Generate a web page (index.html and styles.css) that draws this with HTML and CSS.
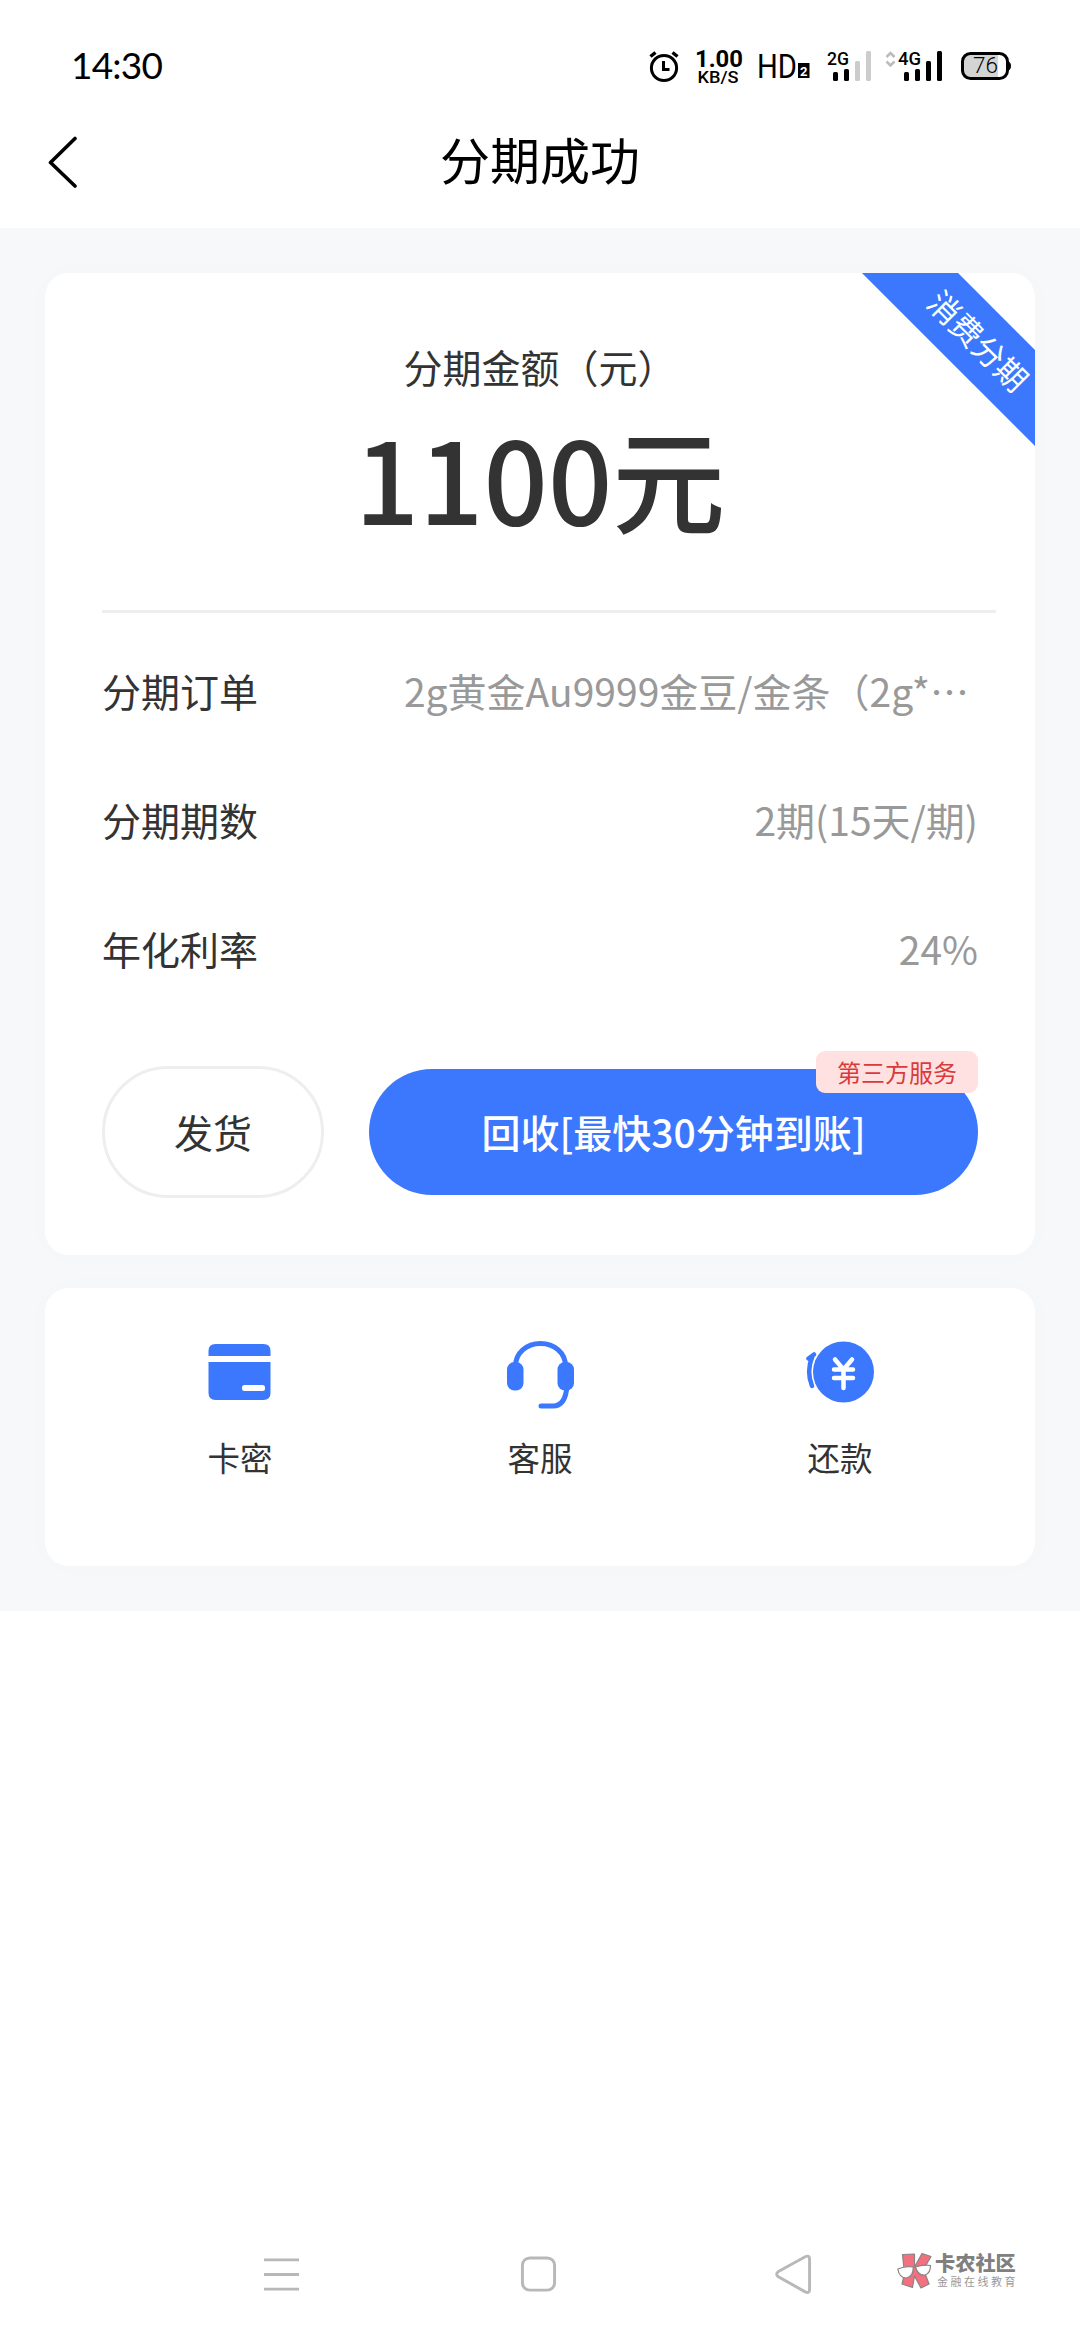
FILE: index.html
```html
<!DOCTYPE html>
<html lang="zh-CN">
<head>
<meta charset="utf-8">
<title>分期成功</title>
<link rel="stylesheet" href="styles.css">
</head>
<body>
<div class="screen">
  <header class="status-bar">
    <span class="clock">14:30</span>
    <svg class="status-icons" width="372" height="44" viewBox="644 44 372 44">
      <g fill="none" stroke="#000">
        <circle cx="664" cy="68" r="12.6" stroke-width="3"/>
        <path d="M663.5 61v8.500h6" stroke-width="3"/>
        <path d="M650.500 56.500l5-4M677.500 56.500l-5-4" stroke-width="3.500"/>
      </g>
      <text x="695" y="66.500" class="bold" font-size="23" textLength="48" lengthAdjust="spacingAndGlyphs">1.00</text>
      <text x="697.500" y="83" class="semi" font-size="17" textLength="41" lengthAdjust="spacingAndGlyphs">KB/S</text>
      <text x="757" y="78" font-size="33" textLength="40" lengthAdjust="spacingAndGlyphs">HD</text>
      <rect x="798" y="63" width="11.500" height="15"/>
      <text x="800" y="75.500" class="bold" font-size="13" fill="#fff">2</text>
      <text x="827" y="65" class="semi" font-size="19" textLength="22" lengthAdjust="spacingAndGlyphs">2G</text>
      <rect x="833" y="72" width="5" height="9" rx="1.500"/>
      <rect x="844" y="69" width="5" height="12" rx="1.500"/>
      <rect x="855" y="61" width="5" height="20" rx="1.500" fill="#ccc"/>
      <rect x="866" y="51" width="5" height="30" rx="1.500" fill="#ccc"/>
      <path d="M886.500 57l4-4 4 4M886.500 61.500l4 4 4-4" fill="none" stroke="#bbb" stroke-width="2.500"/>
      <text x="898" y="65" class="semi" font-size="19" textLength="23" lengthAdjust="spacingAndGlyphs">4G</text>
      <rect x="904" y="72" width="5" height="9" rx="1.500"/>
      <rect x="915" y="69" width="5" height="12" rx="1.500"/>
      <rect x="926" y="61" width="5" height="20" rx="1.500"/>
      <rect x="937" y="51" width="5" height="30" rx="1.500"/>
      <path d="M970 54h28v24h-28q-7 0-7-7v-10q0-7 7-7z" fill="#d4d4d4"/>
      <rect x="962.500" y="53.500" width="45" height="25" rx="8" fill="none" stroke="#000" stroke-width="3"/>
      <path d="M1007.500 61q3.500 1 3.500 5t-3.500 5z"/>
      <text x="973" y="73" class="light" font-size="22" textLength="25" lengthAdjust="spacingAndGlyphs">76</text>
    </svg>
  </header>

  <nav class="title-bar">
    <svg class="back" width="32" height="56" viewBox="0 0 32 56"><path d="M27 4.500L2.500 28.500l24.500 23.500" fill="none" stroke="#000" stroke-width="3.600" stroke-linecap="round" stroke-linejoin="round"/></svg>
    <h1 class="title">分期成功</h1>
  </nav>

  <main class="content">
    <section class="card order">
      <div class="ribbon">消费分期</div>
      <p class="amount-label">分期金额（元）</p>
      <p class="amount">1100元</p>
      <div class="divider"></div>
      <dl class="details">
        <div class="row"><dt>分期订单</dt><dd class="clipped">2g黄金Au9999金豆/金条（2g*…</dd></div>
        <div class="row"><dt>分期期数</dt><dd>2期(15天/期)</dd></div>
        <div class="row"><dt>年化利率</dt><dd>24%</dd></div>
      </dl>
      <div class="actions">
        <button class="btn ship">发货</button>
        <button class="btn recycle">回收[最快30分钟到账]<span class="badge">第三方服务</span></button>
      </div>
    </section>

    <section class="card shortcuts">
      <a class="shortcut">
        <svg width="72" height="72" viewBox="204 1338 72 72">
          <path d="M208.500 1356v-5q0-7 7-7h48q7 0 7 7v5zM208.500 1362h62v31q0 7-7 7h-48q-7 0-7-7z" fill="#3b78fe"/>
          <rect x="242" y="1385" width="23" height="6" rx="2.500" fill="#fff"/>
        </svg>
        <span>卡密</span>
      </a>
      <a class="shortcut">
        <svg width="72" height="72" viewBox="504 1338 72 72">
          <path d="M515.500 1368v-2c0-13 11-22.500 25-22.500s25 9.500 25 22.500v2M567 1386c-1 13-6 20-14 20h-12" fill="none" stroke="#3b78fe" stroke-width="5" stroke-linecap="round"/>
          <rect x="507" y="1362" width="16.500" height="28.500" rx="7.500" fill="#3b78fe"/>
          <rect x="557.500" y="1362" width="16.500" height="28.500" rx="7.500" fill="#3b78fe"/>
        </svg>
        <span>客服</span>
      </a>
      <a class="shortcut">
        <svg width="72" height="72" viewBox="804 1338 72 72">
          <circle cx="843.500" cy="1372" r="30.500" fill="#3b78fe"/>
          <path d="M835 1359.500l8.500 10 8.500-10M843.500 1369v19M834 1369.500h19M834 1378h19" fill="none" stroke="#fff" stroke-width="4.500" stroke-linecap="round"/>
          <path d="M808.500 1358.500l5.500-4M812.500 1356q-6.500 15-.5 30" fill="none" stroke="#3b78fe" stroke-width="4.500" stroke-linecap="round"/>
        </svg>
        <span>还款</span>
      </a>
    </section>
  </main>

  <footer class="nav-bar">
    <svg width="40" height="44" viewBox="262 2252 40 44"><path d="M264 2259.500h36M264 2274.500h36M264 2289.500h36" stroke="#b8b8b8" stroke-width="3"/></svg>
    <svg width="40" height="44" viewBox="520 2252 40 44"><rect x="523.500" y="2257.500" width="33" height="33" rx="7.500" fill="none" stroke="#b8b8b8" stroke-width="3"/></svg>
    <svg width="40" height="44" viewBox="776 2252 40 44"><path d="M780.500 2271.500L808 2256.300q4.500-2 4.500 2.500v31q0 4.500-4.500 2.500l-27.500-15.500q-3.500-2.600 0-5.300z" fill="none" stroke="#b8b8b8" stroke-width="3"/></svg>
    <div class="watermark">
      <svg width="36" height="38" viewBox="900 2252 36 38">
        <g stroke="#8a8382" stroke-width="1.200" stroke-linejoin="round">
          <path d="M905.500 2254.500l12-.5v13l7.500-13.500 9 3-7.500 13 5.500 14.500-8 4-6.500-12-2 11.500-10.500-3.500 2.500-10z" fill="#f2707f"/>
          <path d="M900.800 2269q8-3.500 15.500-2 0 10-7 11-7 0-8.500-9zM918.500 2267q7-2.500 15-1.500 0 8-5.500 9.500-7 1-9.500-8z" fill="#fff"/>
        </g>
      </svg>
      <div class="brand"><b>卡农社区</b><small>金融在线教育</small></div>
    </div>
  </footer>
</div>
</body>
</html>
```
FILE: styles.css
```css
* { box-sizing: border-box; margin: 0; padding: 0; }

body {
  background: #fff;
  font-family: "Noto Sans CJK SC", "Noto Sans", sans-serif;
  color: #333;
}

svg { display: block; }

.screen {
  width: 1080px;
  height: 2340px;
  display: flex;
  flex-direction: column;
  overflow: hidden;
}

.status-bar {
  height: 96px;
  padding: 44px 64px 0 71px;
  display: flex;
  justify-content: space-between;
  align-items: flex-start;
  color: #000;
}

.clock {
  font: 400 37px/42px Lato, sans-serif;
  letter-spacing: -0.8px;
}

.status-icons { font-family: Roboto, sans-serif; }
.status-icons .bold { font-weight: 700; }
.status-icons .semi { font-weight: 500; }
.status-icons .light { font-weight: 300; }

.title-bar {
  height: 132px;
  padding: 0 48px;
  display: grid;
  grid-template-columns: 32px 1fr 32px;
  align-items: center;
}

.title {
  padding-bottom: 8px;
  font-size: 50px;
  font-weight: 400;
  line-height: 74px;
  text-align: center;
  color: #000;
}

.content {
  height: 1383px;
  padding: 45px 45px 0;
  background: #f7f8fa;
}

.card {
  background: #fff;
  border-radius: 24px;
  box-shadow: 0 0 30px rgba(0, 0, 0, 0.015);
}

.order {
  position: relative;
  height: 982px;
  overflow: hidden;
  padding: 65px 57px 0;
}

.ribbon {
  position: absolute;
  left: 783px;
  top: 34px;
  width: 300px;
  height: 68px;
  background: #3b78fe;
  color: #fff;
  font-size: 31.500px;
  line-height: 64px;
  text-align: center;
  transform: rotate(45deg);
}

.amount-label {
  font-size: 39px;
  line-height: 56px;
  text-align: center;
}

.amount {
  font-size: 113px;
  font-weight: 500;
  line-height: 164px;
  text-align: center;
}

.divider {
  width: 894px;
  height: 3px;
  margin-top: 52px;
  background: #eee;
}

.details { padding: 12px 0 0; }

.row {
  height: 129px;
  display: flex;
  justify-content: space-between;
  align-items: center;
  font-size: 39px;
  line-height: 56px;
}

.row dd { color: #999; }
.row .clipped { padding-right: 9px; }

.actions {
  margin-top: 54px;
  display: flex;
  gap: 45px;
  align-items: center;
}

.btn {
  border: 0;
  border-radius: 66px;
  padding-bottom: 3px;
  font: 400 39px/56px "Noto Sans CJK SC", sans-serif;
  background: #fff;
  color: #333;
}

.ship {
  width: 222px;
  height: 132px;
  border: 3px solid #eee;
}

.recycle {
  position: relative;
  width: 609px;
  height: 126px;
  background: #3b78fe;
  color: #fff;
  font-weight: 500;
}

.badge {
  position: absolute;
  right: 0;
  top: -18px;
  width: 162px;
  height: 42px;
  border-radius: 9px;
  background: #ffe1e1;
  color: #d93b3b;
  font-size: 24px;
  font-weight: 400;
  line-height: 41px;
}

.shortcuts {
  height: 278px;
  margin-top: 33px;
  padding: 50px 45px 0;
  display: grid;
  grid-template-columns: repeat(3, 1fr);
}

.shortcut {
  display: flex;
  flex-direction: column;
  align-items: center;
  gap: 23px;
  font-size: 32.500px;
  line-height: 48px;
}

.nav-bar {
  margin-top: auto;
  height: 88px;
  padding: 0 62px 0 262px;
  display: flex;
  align-items: flex-start;
}

.nav-bar > svg:nth-child(2) { margin-left: 218px; }
.nav-bar > svg:nth-child(3) { margin-left: 216px; }

.watermark {
  margin-left: 84px;
  display: flex;
  gap: 2px;
}

.brand {
  display: flex;
  flex-direction: column;
  white-space: nowrap;
}

.brand b {
  font-size: 20.200px;
  font-weight: 900;
  line-height: 22px;
  color: #808080;
}

.brand small {
  padding-left: 2px;
  font-size: 11px;
  letter-spacing: 2.500px;
  line-height: 14px;
  color: #999;
}
```
